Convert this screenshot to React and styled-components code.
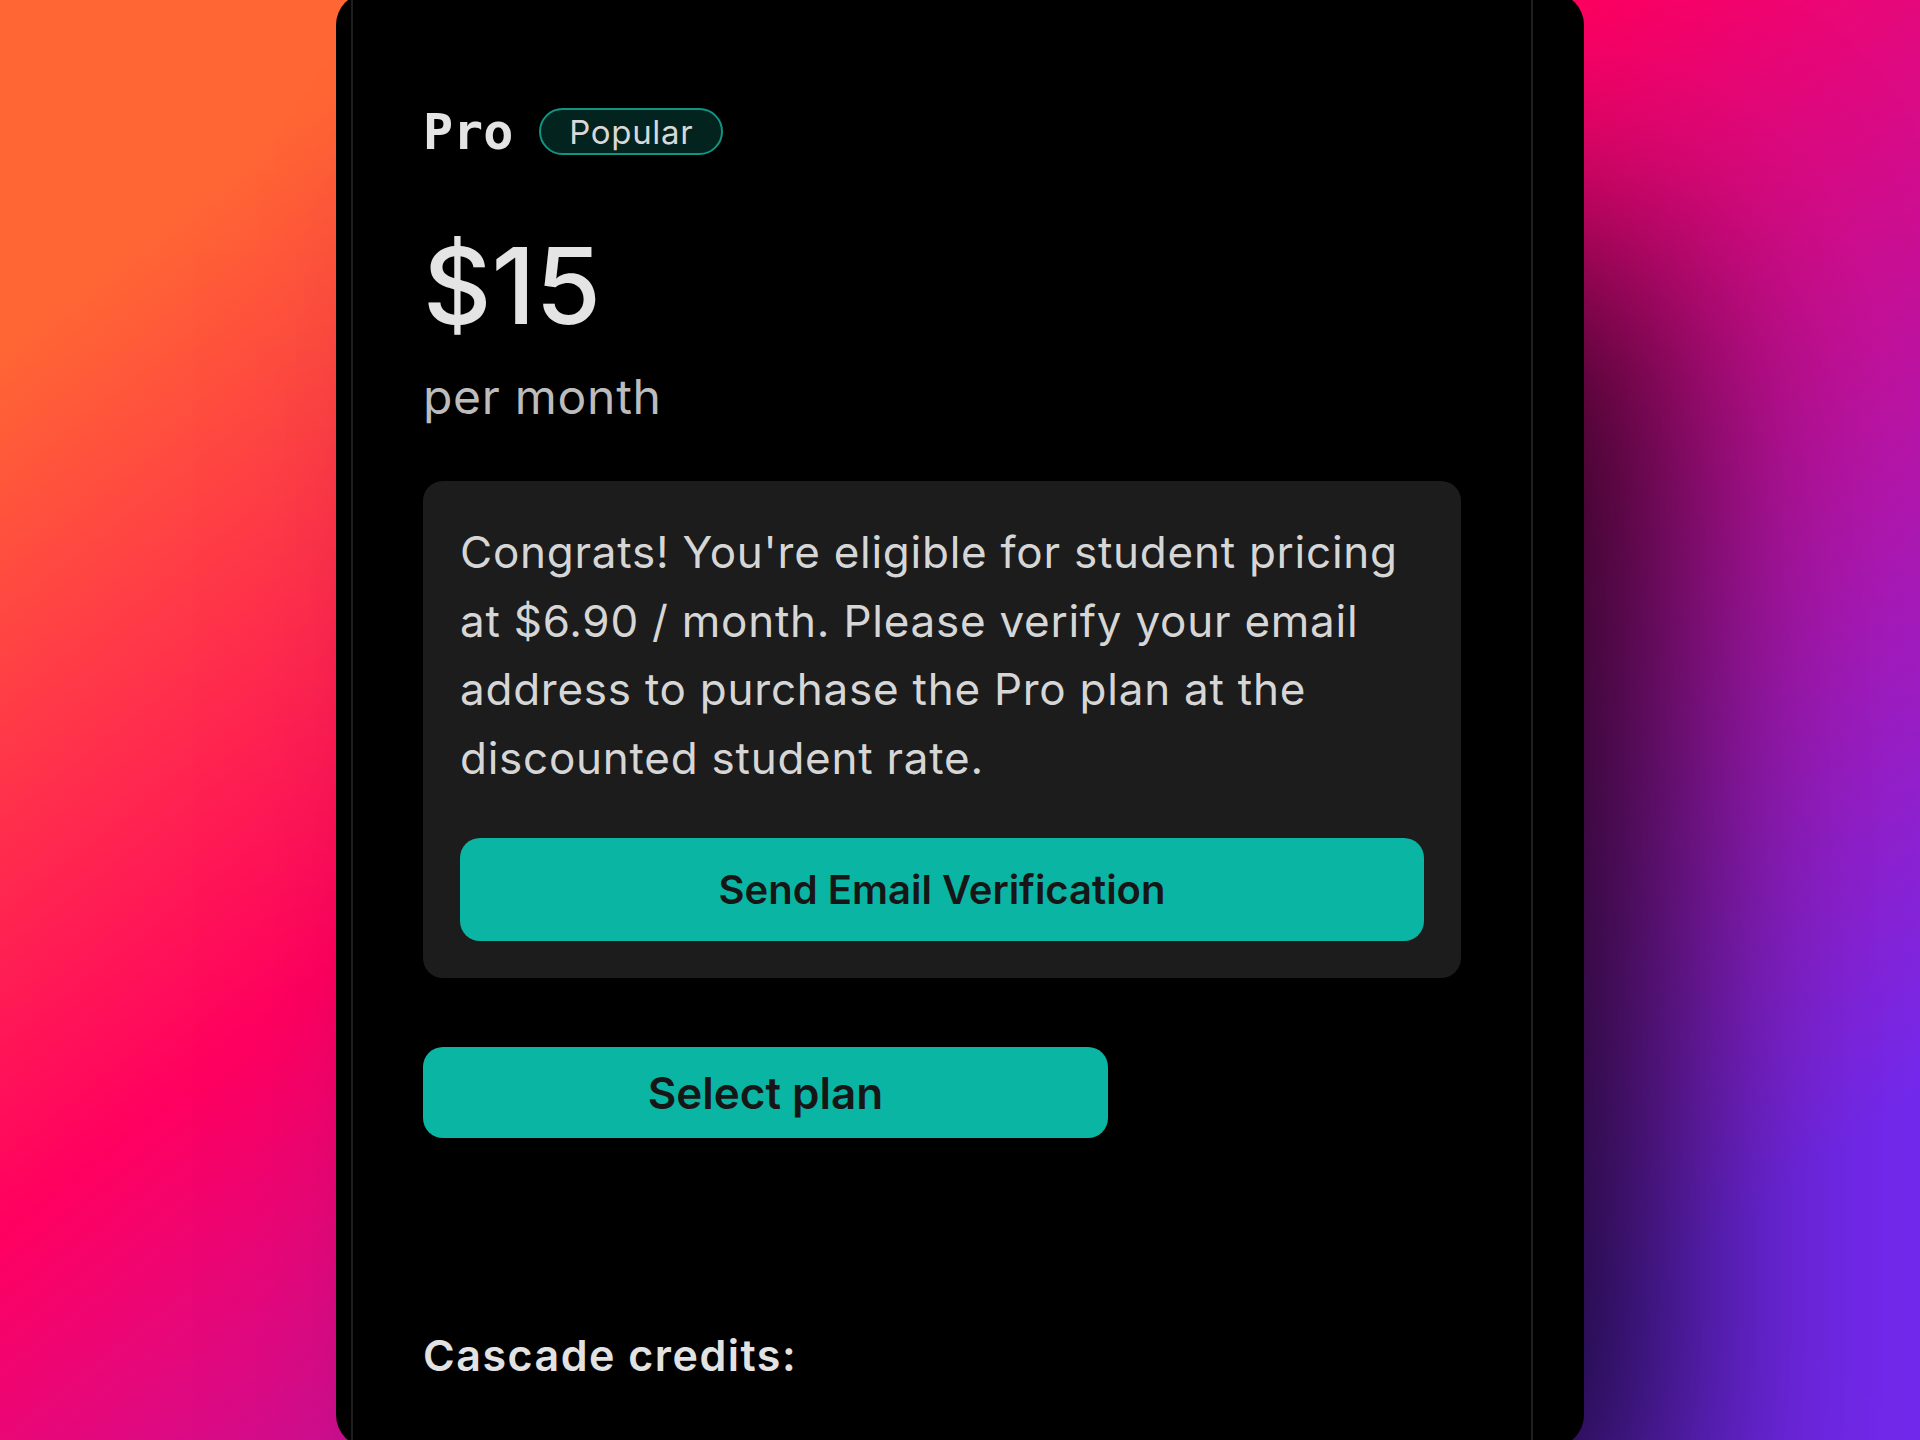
import React from "react";
import styled, { createGlobalStyle } from "styled-components";

// Pro plan card over a warm-to-violet backdrop

const GlobalStyle = createGlobalStyle`
  html, body {
    margin: 0;
    padding: 0;
    height: 1440px;
    overflow: hidden;
  }
  body {
    font-family: "Inter", "Noto Sans", sans-serif;
  }
`;

const Page = styled.div`
  height: 1440px;
  display: flex;
  justify-content: center;
  overflow: hidden;
  background: linear-gradient(
    142deg,
    #ff6634 0%,
    #ff6634 12%,
    #ff0060 42%,
    #7429ee 88%,
    #7429ee 100%
  );
`;

const Card = styled.div`
  width: 1248px;
  height: 1454px;
  margin-top: -7px;
  box-sizing: border-box;
  padding: 0 51px 0 15px;
  background: #000;
  border-radius: 32px;
  box-shadow: 140px 200px 230px -60px rgba(0, 0, 0, 0.85);
  flex-shrink: 0;
`;

const Panel = styled.div`
  height: 100%;
  box-sizing: border-box;
  border-left: 2px solid #1e1e1e;
  border-right: 2px solid #1e1e1e;
  padding: 115px 70px 0;
  display: flex;
  flex-direction: column;
  align-items: flex-start;
`;

const TitleRow = styled.div`
  display: flex;
  align-items: center;
  gap: 26px;
  height: 47px;
`;

const PlanName = styled.h2`
  margin: 0;
  font-family: "DejaVu Sans Mono", "Liberation Mono", monospace;
  font-size: 50px;
  font-weight: 700;
  color: #e4e4e4;
  line-height: 1;
`;

const Badge = styled.span`
  display: inline-flex;
  align-items: center;
  box-sizing: border-box;
  height: 47px;
  padding: 0 28px;
  border: 2px solid #109483;
  border-radius: 999px;
  background: #03231f;
  color: #d8d8d8;
  font-size: 33px;
  letter-spacing: 0.02em;
`;

const Price = styled.div`
  margin-top: 78px;
  font-size: 106px;
  line-height: 1;
  font-weight: 500;
  color: #e4e4e4;
`;

const Period = styled.div`
  margin-top: 22px;
  font-size: 48px;
  line-height: 1.5;
  letter-spacing: 0.015em;
  color: #bcbcbc;
`;

const Notice = styled.div`
  margin-top: 48px;
  align-self: stretch;
  box-sizing: border-box;
  padding: 37px;
  background: #1c1c1c;
  border-radius: 20px;
`;

const NoticeText = styled.p`
  margin: 0;
  font-size: 44px;
  line-height: 68.6px;
  letter-spacing: 0.017em;
  color: #d6d6d6;
`;

const TealButton = styled.button`
  display: block;
  box-sizing: border-box;
  border: none;
  border-radius: 20px;
  background: #0bb5a3;
  color: #161616;
  font-family: "Inter", sans-serif;
  font-weight: 600;
  cursor: pointer;
  width: ${(p) => (p.$wide ? "100%" : "685px")};
  height: ${(p) => (p.$wide ? "103px" : "91px")};
  font-size: ${(p) => (p.$wide ? "40px" : "44px")};
  margin-top: ${(p) => (p.$wide ? "46px" : "69px")};
`;

const SectionLabel = styled.h3`
  margin: 185px 0 0;
  font-size: 43px;
  line-height: 1.5;
  font-weight: 600;
  letter-spacing: 0.035em;
  color: #e2e2e2;
`;

export default function App() {
  return (
    <>
      <GlobalStyle />
      <Page>
        <Card>
          <Panel>
            <TitleRow>
              <PlanName>Pro</PlanName>
              <Badge>Popular</Badge>
            </TitleRow>
            <Price>$15</Price>
            <Period>per month</Period>
            <Notice>
              <NoticeText>
                Congrats! You're eligible for student pricing at $6.90 /
                month. Please verify your email address to purchase the Pro
                plan at the discounted student rate.
              </NoticeText>
              <TealButton $wide>Send Email Verification</TealButton>
            </Notice>
            <TealButton>Select plan</TealButton>
            <SectionLabel>Cascade credits:</SectionLabel>
          </Panel>
        </Card>
      </Page>
    </>
  );
}
